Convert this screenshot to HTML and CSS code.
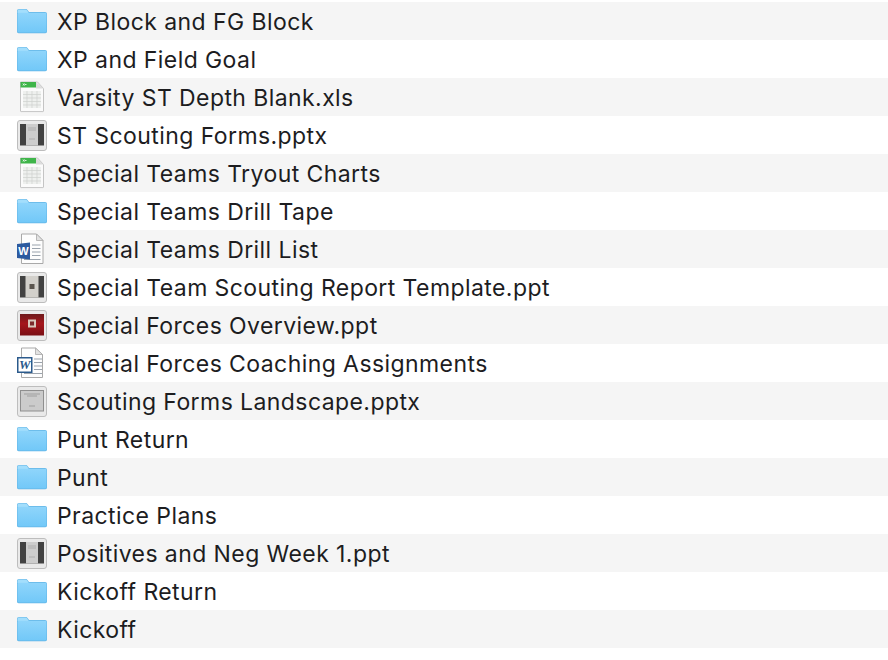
FILE: index.html
```html
<!DOCTYPE html>
<html>

<head>
    <meta charset="UTF-8">
    <title>Special Teams</title>
    <link rel="stylesheet" href="styles.css">
</head>

<body>
    <svg class="defs" width="0" height="0">
        <defs>
            <linearGradient id="folderBody" x1="0" y1="0" x2="0" y2="1">
                <stop offset="0" stop-color="#8fd5fb" />
                <stop offset="1" stop-color="#72c8f8" />
            </linearGradient>
            <linearGradient id="redSlide" x1="0" y1="0" x2="0" y2="1">
                <stop offset="0" stop-color="#6e1a1c" />
                <stop offset="0.45" stop-color="#a5161c" />
                <stop offset="1" stop-color="#7a0f14" />
            </linearGradient>
        </defs>
        <symbol id="folder" viewBox="0 0 30 38">
            <path d="M0 9C0 7.800.8 7 2 7h6.500c1 0 1.600.4 2.200 1.200L12 10h16c1.200 0 2 .8 2 2v17.500c0 1-.7 1.700-1.700 1.700H1.700C.7 31.200 0 30.500 0 29.500z" fill="#62b5e6" />
            <path d="M.5 12V9c0-.9.6-1.500 1.500-1.500h6.500c.8 0 1.300.3 1.800 1L11.700 11H.5z" fill="#a3defc" />
            <path d="M.5 12c0-.7.5-1.200 1.200-1.200h26.600c.7 0 1.200.5 1.200 1.200v17.300c0 .7-.5 1.100-1.100 1.100H1.600c-.6 0-1.100-.4-1.100-1.100z" fill="url(#folderBody)" />
        </symbol>
        <symbol id="sheet" viewBox="0 0 30 38">
            <path d="M3.500 4h17l6 6.500V33a.6.600 0 0 1-.6.600H4.100a.6.600 0 0 1-.6-.6z" fill="#fbfbfb" stroke="#c4c4c4" />
            <path d="M3.500 4h15.500v5.500H3.500z" fill="#3fb54a" />
            <path d="M19 4l7.500 6.500H19z" fill="#dcdcdc" />
            <path d="M6 7.500l1.500-2M7.500 7.500L6 5.500M8 6.500h1.500" stroke="#fff" stroke-width=".8" />
            <path d="M6 13h18v17H6z" fill="#eef0ee" />
            <path d="M6 16.500h18M6 20h18M6 23.500h18M6 27h18M10 13v17M15 13v17M20 13v17" stroke="#cdd0cd" stroke-width=".7" />
        </symbol>
        <symbol id="slideFrame" viewBox="0 0 30 38">
            <rect x=".5" y="4.500" width="29" height="30" rx="2.500" fill="#e9e9e9" stroke="#bdbdbd" />
        </symbol>
        <symbol id="slidePage" viewBox="0 0 30 38">
            <use href="#slideFrame" />
            <path d="M3 8h24v21.500H3z" fill="#424242" />
            <path d="M9 8h12v21.500H9z" fill="#cdcdcd" />
            <path d="M11 12h8M11 14h8M12 23h6" stroke="#a5a5a5" stroke-width=".8" />
        </symbol>
        <symbol id="slideDot" viewBox="0 0 30 38">
            <use href="#slideFrame" />
            <path d="M3 8h24v21.500H3z" fill="#424242" />
            <path d="M8.500 8h13v21.500h-13z" fill="#d2d0cb" />
            <rect x="12.500" y="16" width="5" height="5" fill="#5a554f" />
        </symbol>
        <symbol id="slideRed" viewBox="0 0 30 38">
            <use href="#slideFrame" />
            <path d="M3 8h24v21.500H3z" fill="url(#redSlide)" />
            <rect x="11" y="13.500" width="8" height="8" fill="#d8c8bc" />
            <rect x="13" y="15.500" width="4" height="4" fill="#7b2b2b" />
        </symbol>
        <symbol id="slideGrey" viewBox="0 0 30 38">
            <use href="#slideFrame" />
            <path d="M3 8h24v21.500H3z" fill="#8f8f8f" />
            <path d="M4 9h22v19.500H4z" fill="#cbcbcb" />
            <path d="M7 12h16M10 14h10M12 24h6" stroke="#959595" stroke-width=".8" />
        </symbol>
    </svg>

    <ul class="file-list">
        <li class="file-row"><svg class="file-icon"><use href="#folder" /></svg><span class="file-name">XP Block and FG Block</span></li>
        <li class="file-row"><svg class="file-icon"><use href="#folder" /></svg><span class="file-name">XP and Field Goal</span></li>
        <li class="file-row"><svg class="file-icon"><use href="#sheet" /></svg><span class="file-name">Varsity ST Depth Blank.xls</span></li>
        <li class="file-row"><svg class="file-icon"><use href="#slidePage" /></svg><span class="file-name">ST Scouting Forms.pptx</span></li>
        <li class="file-row"><svg class="file-icon"><use href="#sheet" /></svg><span class="file-name">Special Teams Tryout Charts</span></li>
        <li class="file-row"><svg class="file-icon"><use href="#folder" /></svg><span class="file-name">Special Teams Drill Tape</span></li>
        <li class="file-row">
            <svg class="file-icon" viewBox="0 0 30 38">
                <path d="M4.500 4h15l6.500 6.500v23H4.500z" fill="#fdfdfd" stroke="#a9a9a9" />
                <path d="M19.500 4v6.500H26z" fill="#e2e2e2" stroke="#a9a9a9" stroke-width=".8" />
                <path d="M15 15h8.500M15 18.500h8.500M15 22h8.500M15 25.500h8.500M7 29.500h16.500" stroke="#9aa3ad" />
                <path d="M0 14l13-1.500v17L0 28z" fill="#2c5a9f" />
                <text x="6.500" y="25" class="word-letter">W</text>
            </svg>
            <span class="file-name">Special Teams Drill List</span>
        </li>
        <li class="file-row"><svg class="file-icon"><use href="#slideDot" /></svg><span class="file-name">Special Team Scouting Report Template.ppt</span></li>
        <li class="file-row"><svg class="file-icon"><use href="#slideRed" /></svg><span class="file-name">Special Forces Overview.ppt</span></li>
        <li class="file-row">
            <svg class="file-icon" viewBox="0 0 30 38">
                <path d="M4.500 4h14l7 6.500v23h-21z" fill="#fdfdfd" stroke="#a9a9a9" />
                <path d="M18.500 4v6.500h7z" fill="#e2e2e2" stroke="#a9a9a9" stroke-width=".8" />
                <path d="M17 15h8M17 18.500h8M17 22h8M17 25.500h8M7 29.500h18" stroke="#9aa3ad" />
                <rect x=".75" y="13.750" width="14" height="14.500" fill="#fff" stroke="#2b5a8c" stroke-width="1.500" />
                <text x="7.800" y="25" class="word-letter-old">W</text>
            </svg>
            <span class="file-name">Special Forces Coaching Assignments</span>
        </li>
        <li class="file-row"><svg class="file-icon"><use href="#slideGrey" /></svg><span class="file-name">Scouting Forms Landscape.pptx</span></li>
        <li class="file-row"><svg class="file-icon"><use href="#folder" /></svg><span class="file-name">Punt Return</span></li>
        <li class="file-row"><svg class="file-icon"><use href="#folder" /></svg><span class="file-name">Punt</span></li>
        <li class="file-row"><svg class="file-icon"><use href="#folder" /></svg><span class="file-name">Practice Plans</span></li>
        <li class="file-row"><svg class="file-icon"><use href="#slidePage" /></svg><span class="file-name">Positives and Neg Week 1.ppt</span></li>
        <li class="file-row"><svg class="file-icon"><use href="#folder" /></svg><span class="file-name">Kickoff Return</span></li>
        <li class="file-row"><svg class="file-icon"><use href="#folder" /></svg><span class="file-name">Kickoff</span></li>
    </ul>
</body>

</html>
```

FILE: styles.css
```css
html,
body {
    margin: 0;
    width: 100%;
    height: 100%;
    background-color: #FFFFFF;
}

.defs {
    display: block;
    height: 0;
}

.file-list {
    margin: 0;
    padding: 2px 0 0 0;
    list-style: none;
}

.file-row {
    display: flex;
    align-items: center;
    gap: 10px;
    height: 38px;
    padding-left: 17px;
    font-family: Inter, sans-serif;
    font-size: 23px;
    letter-spacing: 0.42px;
    color: #1d1d1f;
}

.file-row:nth-child(odd) {
    background-color: #F5F5F5;
}

.file-icon {
    flex: none;
    width: 30px;
    height: 38px;
}

.file-name {
    padding-top: 2px;
}

.word-letter,
.word-letter-old {
    font-family: "Liberation Sans", sans-serif;
    font-size: 11px;
    font-weight: bold;
    text-anchor: middle;
    letter-spacing: 0;
    fill: #FFFFFF;
}

.word-letter-old {
    font-family: "Liberation Serif", serif;
    font-size: 13px;
    font-style: italic;
    fill: #2B5A8C;
}
```
